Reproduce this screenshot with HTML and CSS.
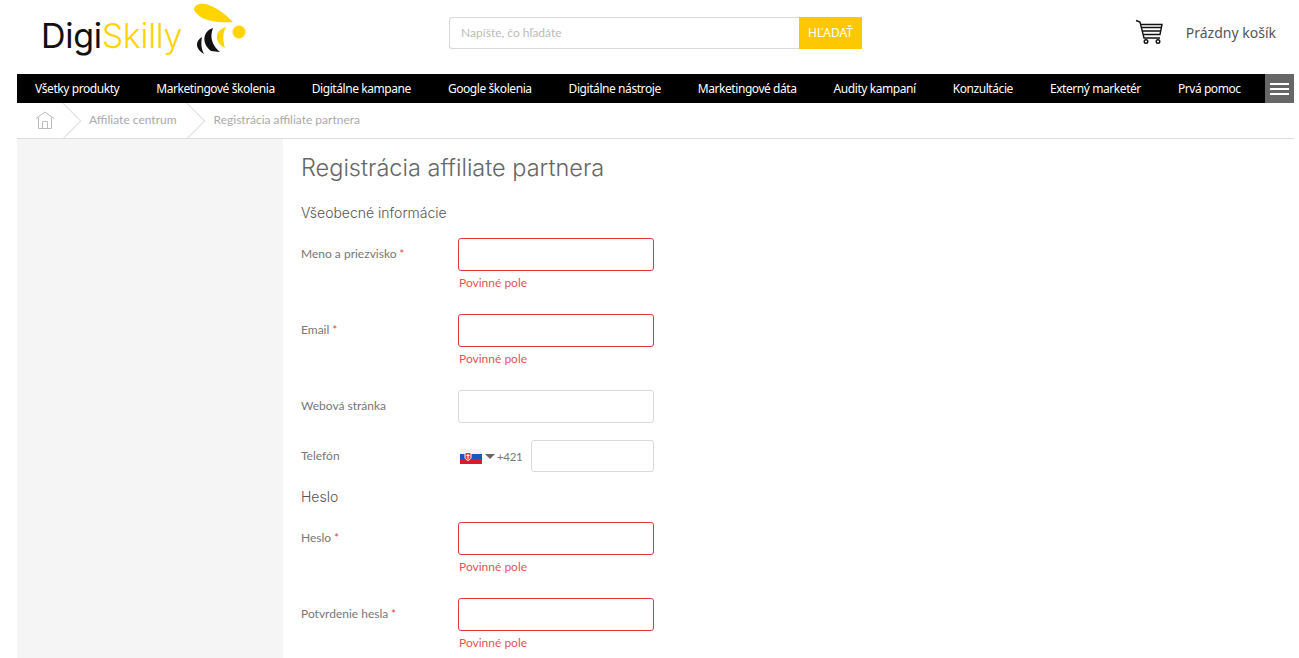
FILE: index.html
```html
<!DOCTYPE html>
<html lang="sk">
<head>
<meta charset="utf-8">
<title>Registrácia affiliate partnera</title>
<link rel="stylesheet" href="styles.css">
</head>
<body>
<div class="page">
  <header class="header">
    <a class="logo"><span class="logo-dark">Digi</span><span class="logo-yellow">Skilly</span>
      <svg class="bee" width="60" height="56" viewBox="0 0 60 56">
        <path fill="#ffd400" d="M4 10C4 5 9 3 15 4C25 6 35 14 43 22C30 23 10 22 4 10Z"/>
        <circle fill="#ffd400" cx="49" cy="32" r="6.500"/>
        <path fill="#ffd400" d="M36 27C25 30 23 42 35 48C33 41 32 34 36 27Z"/>
        <path fill="#111" d="M23 28C13 31 11 43 21 51L30 52C23 46 19 38 23 28Z"/>
        <path fill="#111" d="M12 37C5 41 5 49 14 54C11 48 11 43 12 37Z"/>
      </svg>
    </a>
    <form class="search">
      <div class="search-input">Napíšte, čo hľadáte</div>
      <div class="search-btn">HĽADAŤ</div>
    </form>
    <div class="cart">
      <svg class="cart-icon" width="30" height="26" viewBox="0 0 30 26" fill="none" stroke="#111" stroke-width="1.400">
        <path d="M1 1.500L5 3L9 19H25"/>
        <path d="M6 5.500H27L25 15.500H8.500"/>
        <path d="M7 8.500H26M7.500 12H25.500"/>
        <circle cx="11" cy="22.500" r="1.800"/>
        <circle cx="23" cy="22.500" r="1.800"/>
      </svg>
      <span>Prázdny košík</span>
    </div>
  </header>
  <nav class="nav">
    <a>Všetky produkty</a>
    <a>Marketingové školenia</a>
    <a>Digitálne kampane</a>
    <a>Google školenia</a>
    <a>Digitálne nástroje</a>
    <a>Marketingové dáta</a>
    <a>Audity kampaní</a>
    <a>Konzultácie</a>
    <a>Externý marketér</a>
    <a>Prvá pomoc</a>
    <div class="burger"><i></i><i></i><i></i></div>
  </nav>
  <div class="crumbs">
    <svg class="home" width="20" height="20" viewBox="0 0 20 20" fill="none" stroke="#bbb" stroke-width="1">
      <path d="M1 8.500L10 2L19 8.500"/>
      <path d="M3.500 7.500V18.500H16.500V7.500"/>
      <path d="M7.500 18.500V11.500H12.500V18.500"/>
    </svg>
    <span class="crumb crumb-first">Affiliate centrum</span>
    <span class="crumb">Registrácia affiliate partnera</span>
  </div>
  <div class="body">
    <aside class="side"></aside>
    <main class="main">
      <h1 class="title">Registrácia affiliate partnera</h1>
      <h2 class="section">Všeobecné informácie</h2>
      <div class="row row-err">
        <label class="label">Meno a priezvisko <em>*</em></label>
        <div class="field"><div class="input bad"></div><div class="err">Povinné pole</div></div>
      </div>
      <div class="row row-err">
        <label class="label">Email <em>*</em></label>
        <div class="field"><div class="input bad"></div><div class="err">Povinné pole</div></div>
      </div>
      <div class="row row-plain">
        <label class="label">Webová stránka</label>
        <div class="field"><div class="input"></div></div>
      </div>
      <div class="row row-plain">
        <label class="label">Telefón</label>
        <div class="field phone">
          <svg class="flag" width="22" height="15" viewBox="0 0 22 15">
            <rect width="22" height="5" fill="#f3f3f3"/>
            <rect y="5" width="22" height="5" fill="#1d55c0"/>
            <rect y="10" width="22" height="5" fill="#dc1a2e"/>
            <path d="M5 3.500H11V8.500C11 10 9 11 8 11.500C7 11 5 10 5 8.500Z" fill="#e8333c" stroke="#fff"/>
            <path d="M8 5V10M6.500 6.500H9.500" stroke="#fff" stroke-width="1"/>
          </svg>
          <span class="caret"></span>
          <span class="prefix">+421</span>
          <div class="input tel"></div>
        </div>
      </div>
      <h2 class="section section-2">Heslo</h2>
      <div class="row row-err">
        <label class="label">Heslo <em>*</em></label>
        <div class="field"><div class="input bad"></div><div class="err">Povinné pole</div></div>
      </div>
      <div class="row row-err">
        <label class="label">Potvrdenie hesla <em>*</em></label>
        <div class="field"><div class="input bad"></div><div class="err">Povinné pole</div></div>
      </div>
    </main>
  </div>
</div>
</body>
</html>
```
FILE: styles.css
```css
html, body { margin: 0; padding: 0; height: 658px; overflow: hidden; background: #fff; }
body { font-family: "Lato", "Noto Sans", sans-serif; color: #666; font-size: 12px; }
.page { margin-left: 17px; width: 1277px; }

.header { height: 74px; display: flex; align-items: flex-start; position: relative; }
.logo { width: 432px; height: 74px; padding-left: 24px; box-sizing: border-box; display: flex; align-items: flex-start; font-family: "Inter", sans-serif; font-size: 34px; font-weight: 300; line-height: 36px; letter-spacing: -0.300px; position: relative; }
.logo-dark, .logo-yellow { padding-top: 18px; }
.logo-dark { color: #111; font-weight: 400; }
.logo-yellow { color: #ffd400; }
.bee { position: absolute; left: 173px; top: 0; }
.search { margin-top: 17px; display: flex; width: 413px; height: 32px; }
.search-input { flex: 1; border: 1px solid #d9d9d9; border-right: 0; border-radius: 3px 0 0 3px; box-sizing: border-box; padding-left: 11px; line-height: 30px; color: #bbb; }
.search-btn { width: 63px; background: #fdc800; color: #fff; text-align: center; line-height: 32px; font-size: 12px; font-family: "Noto Sans", sans-serif; }
.cart { margin-left: auto; margin-top: 19px; display: flex; align-items: center; padding-right: 18px; font-family: "Noto Sans", sans-serif; font-size: 14px; color: #555; height: 26px; }
.cart-icon { margin-right: 21px; }

.nav { height: 29px; background: #000; display: flex; align-items: center; padding-left: 18px; position: relative; }
.nav a { color: #fff; font-family: "Noto Sans", sans-serif; font-size: 12px; letter-spacing: -0.430px; white-space: nowrap; margin-right: 37px; }
.burger { position: absolute; right: 0; top: 0; width: 29px; height: 29px; background: #666; display: flex; flex-direction: column; justify-content: center; align-items: center; gap: 3px; }
.burger i { display: block; width: 19px; height: 2px; background: #fff; }

.crumbs { height: 33px; padding: 0 0 2px 18px; border-bottom: 1px solid #ddd; display: flex; align-items: center; color: #aaa; overflow: hidden; }
.crumb { position: relative; margin-left: 37px; }
.crumb-first { margin-left: 34px; }
.crumb::before { content: ""; position: absolute; left: -40px; top: 50%; width: 25px; height: 25px; margin-top: -12px; border-top: 1px solid #ddd; border-right: 1px solid #ddd; transform: rotate(45deg); }
.crumb-first::before { left: -39px; }

.body { display: flex; height: 519px; }
.side { width: 266px; background: #f5f5f5; flex-shrink: 0; }
.main { padding-left: 18px; flex: 1; }
.title { margin: 16px 0 0; font-family: "Inter", sans-serif; font-weight: 300; font-size: 23.500px; line-height: 26px; color: #666; }
.section { margin: 23px 0 0; font-family: "Inter", sans-serif; font-weight: 300; font-size: 14px; line-height: 18px; color: #555; height: 34px; }
.section-2 { margin: -2px 0 0; }
.row { display: flex; align-items: flex-start; }
.row-err { height: 76px; }
.row-plain { height: 50px; }
.label { width: 157px; flex-shrink: 0; line-height: 31px; color: #777; }
.label em { color: #e23b3b; font-style: normal; font-size: 11px; }
.field { width: 196px; }
.input { height: 33px; border: 1px solid #d9d9d9; border-radius: 3px; box-sizing: border-box; background: #fff; }
.input.bad { border-color: #dc3a3a; }
.err { margin: 4px 0 0 1px; color: #e05555; line-height: 16px; }
.phone { display: flex; align-items: center; height: 32px; padding-left: 2px; box-sizing: border-box; }
.flag { flex-shrink: 0; }
.caret { width: 0; height: 0; border: 5px solid transparent; border-top: 5px solid #666; border-bottom: 0; margin: 0 2px 0 3px; }
.prefix { color: #777; font-size: 11.500px; letter-spacing: -0.300px; }
.tel { width: 123px; height: 32px; margin-left: auto; }
```
